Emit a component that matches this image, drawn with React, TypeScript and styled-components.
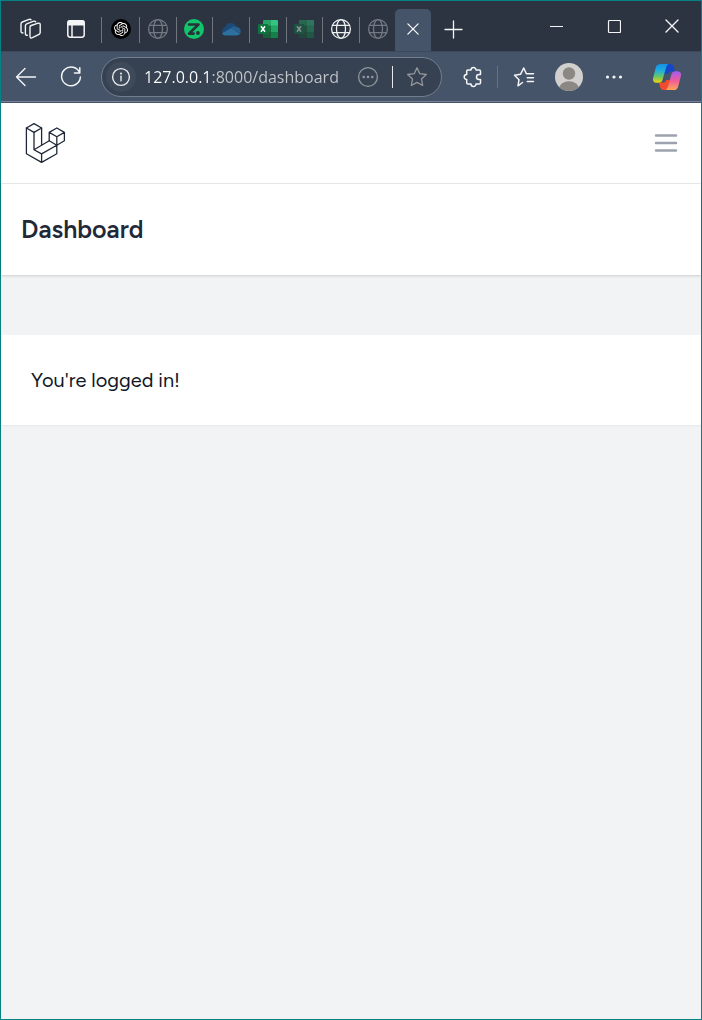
import React from "react";
import styled, { createGlobalStyle } from "styled-components";
import { SiOpenai } from "react-icons/si";

const GlobalStyle = createGlobalStyle`
  * { box-sizing: border-box; }
  body { margin: 0; background: #f2f3f5; }
  button, input { font: inherit; }
`;

const Window = styled.div`
  display: flex;
  flex-direction: column;
  min-height: 100vh;
  border: 1px solid #048286;
  background: #f2f3f5;
  font-family: Figtree, Lato, "Open Sans", sans-serif;
`;

const TabStrip = styled.div`
  display: flex;
  align-items: stretch;
  height: 50px;
  background: #2b3440;
`;

const StripTools = styled.div`
  display: flex;
  width: 100px;
  padding-left: 7px;
`;

const IconButton = styled.button<{ $width?: number }>`
  display: flex;
  flex: none;
  align-items: center;
  justify-content: center;
  width: ${(p) => p.$width ?? 45}px;
  padding: 0;
  border: 0;
  background: none;
  color: #f4f5f6;
`;

const StripButton = styled(IconButton)`
  padding-top: 6px;
`;

const Tabs = styled.div`
  display: flex;
  width: 330px;
  padding-top: 8px;
`;

const Tab = styled.button<{ $dim?: boolean }>`
  display: flex;
  flex: 1;
  align-items: center;
  justify-content: center;
  height: 26px;
  margin-top: 8px;
  padding: 0 0 2px;
  border: 0;
  border-left: 1px solid #70767e;
  background: none;
  color: ${(p) => (p.$dim ? "#737982" : "#eceef0")};

  &:first-child {
    flex: 0 0 38px;
  }
`;

const ActiveTab = styled.button`
  display: flex;
  flex: 1;
  align-items: center;
  justify-content: center;
  padding: 0 0 2px;
  border: 0;
  border-radius: 5px 5px 0 0;
  background: #455469;
  color: #ffffff;
`;

const WindowControls = styled.div`
  display: flex;
  margin-left: auto;
`;

const Toolbar = styled.div`
  display: flex;
  align-items: center;
  height: 52px;
  padding: 0 3px 2px 2px;
  background: #455469;
  border-top: 1px solid #3d495a;
  box-shadow: inset 0 -1px 0 #455469, inset 0 -2px 0 #778294;
`;

const AddressBar = styled.label`
  display: flex;
  flex: 1;
  align-items: center;
  min-width: 0;
  height: 40px;
  margin: 0 8px;
  padding: 0 0 0 4px;
  border: 1px solid #747f8e;
  border-radius: 20px;
  background: #364252;
  color: #94979b;
`;

const SiteInfo = styled.span`
  display: flex;
  flex: none;
  align-items: center;
  justify-content: center;
  width: 30px;
  height: 30px;
  border-radius: 15px;
  background: #3e4959;
  color: #e9ebed;
`;

const AddressInput = styled.input`
  flex: 1;
  min-width: 0;
  height: 30px;
  margin-left: 8px;
  padding: 0;
  border: 0;
  outline: 0;
  background: linear-gradient(90deg, #ffffff 67px, #c3c6ca 67px);
  background-clip: text;
  -webkit-background-clip: text;
  -webkit-text-fill-color: transparent;
  font-family: "Segoe UI", "Open Sans", sans-serif;
  font-size: 16px;
`;

const PillButton = styled(IconButton)`
  height: 30px;
  color: #94979b;
`;

const Divider = styled.span<{ $color: string }>`
  flex: none;
  width: 1px;
  height: 22px;
  background: ${(p) => p.$color};
`;

const ToolDivider = styled(Divider)`
  margin: 0 3px 0 2px;
`;

const Nav = styled.nav`
  display: flex;
  align-items: center;
  justify-content: space-between;
  height: 81px;
  padding: 0 20px;
  border-bottom: 1px solid #eaebee;
  background: #ffffff;
`;

const HomeLink = styled.a`
  display: flex;
  color: #1f2937;
`;

const MenuButton = styled(IconButton)`
  width: 30px;
  height: 30px;
  color: #9ca3af;
`;

const PageHeader = styled.header`
  padding: 30px 20px;
  background: #ffffff;
  box-shadow: 0 1px 3px rgba(0, 0, 0, 0.1), 0 1px 2px rgba(0, 0, 0, 0.06);
`;

const Title = styled.h2`
  margin: 0;
  color: #1f2937;
  font-family: Figtree, Inter, sans-serif;
  font-size: 25px;
  font-weight: 600;
  line-height: 31px;
`;

const Main = styled.main`
  padding: 60px 0;
`;

const Card = styled.section`
  padding: 30px;
  background: #ffffff;
  box-shadow: 0 1px 2px rgba(0, 0, 0, 0.05);
`;

const Message = styled.p`
  margin: 0;
  color: #111827;
  font-size: 20px;
  line-height: 30px;
`;

const stroke = {
  fill: "none",
  stroke: "currentColor",
  strokeLinecap: "round" as const,
  strokeLinejoin: "round" as const,
};

const Workspaces = () => (
  <svg width="24" height="22" viewBox="0 0 24 22" {...stroke} strokeWidth="1.4">
    <path d="M11 9.2q0-1.3 1.200-1.700l7-2.300q2-.5 2 1.300v8q0 1.200-1.200 1.800l-6.600 3.400q-2.400 1-2.400-1.400z" />
    <path d="M8.400 17.200q-2 .3-2-1.800V7.800q0-1.400 1.300-1.900l7-2.700q1.400-.4 2 .6" />
    <path d="M4 14.900q-2 .3-2-1.800V6q0-1.400 1.300-2l6.800-2.700q1.200-.4 1.900.5" />
  </svg>
);

const TabPane = () => (
  <svg width="20" height="20" viewBox="0 0 20 20" {...stroke} strokeWidth="1.5">
    <rect x="1.8" y="1.8" width="16.4" height="16.4" rx="2.4" />
    <path d="M2.300 2.300h15.400v3.500H2.300z" fill="currentColor" />
    <path d="M6 6v12" />
  </svg>
);

const Globe = () => (
  <svg width="22" height="22" viewBox="0 0 22 22" {...stroke} strokeWidth="1.3">
    <circle cx="11" cy="11" r="9.4" />
    <ellipse cx="11" cy="11" rx="4.5" ry="9.4" />
    <path d="M2.500 7.300h17M2.500 14.700h17" />
  </svg>
);

const OpenAiBadge = styled.span`
  display: flex;
  align-items: center;
  justify-content: center;
  width: 20px;
  height: 20px;
  border-radius: 50%;
  background: #000000;
  color: #ffffff;
`;

const GreenMark = () => (
  <svg width="20" height="20" viewBox="0 0 20 20">
    <circle cx="10" cy="10" r="10" fill="#12c46b" />
    <path d="M5 5.500h9.500L5 14.600h4.600" fill="none" stroke="#26333a" strokeWidth="2.600" strokeLinejoin="round" strokeLinecap="round" />
    <circle cx="13.900" cy="14" r="1.900" fill="#26333a" />
  </svg>
);

const Cloud = () => (
  <svg width="20" height="14" viewBox="0 0 20 14">
    <path d="M4 5.200A6 6 0 0 1 15.200 4.700L17 8 4 12.800A4 4 0 0 1 4 5.200z" fill="#1c4a78" />
    <path d="M8.800 7.200a5 5 0 0 1 6.500-2.500 4.600 4.600 0 0 1 4.200 6.200z" fill="#27608f" />
    <path d="M1 11.200 8.600 7q1.200-.5 2.400.2l8.300 4.200Q18 13.400 15.400 13.400H4.400q-2.300 0-3.400-2.200z" fill="#2d6f9f" />
  </svg>
);

const Spreadsheet = ({ dim }: { dim?: boolean }) => (
  <svg width="20" height="18" viewBox="0 0 20 18" opacity={dim ? 0.45 : 1}>
    <path d="M6 0h7v6H5V1q0-1 1-1z" fill="#22a565" />
    <path d="M13 0h6q1 0 1 1v5h-7z" fill="#35c481" />
    <path d="M5 5.500h8V12H5z" fill="#15733f" />
    <path d="M13 5.500h7V12h-7z" fill="#22a565" />
    <path d="M5 12h15v5q0 1-1 1H6q-1 0-1-1z" fill="#176039" />
    <path d="M13 12h7v5q0 1-1 1h-6z" fill="#14804a" />
    <rect y="4" width="10" height="10" rx="1" fill="#0d7440" />
    <path d="m3 6.200 4 5.600M7 6.200l-4 5.600" stroke="#ffffff" strokeWidth="1.500" />
  </svg>
);

const Cross = ({ size }: { size: number }) => (
  <svg width={size} height={size} viewBox="0 0 14 14" {...stroke} strokeWidth="1.4">
    <path d="m1 1 12 12M13 1 1 13" />
  </svg>
);

const Plus = () => (
  <svg width="19" height="19" viewBox="0 0 19 19" {...stroke} strokeWidth="1.3">
    <path d="M9.500 1v17M1 9.500h17" />
  </svg>
);

const Minimize = () => (
  <svg width="14" height="14" viewBox="0 0 14 14">
    <path d="M1 7.500h13" stroke="currentColor" />
  </svg>
);

const Maximize = () => (
  <svg width="14" height="14" viewBox="0 0 14 14">
    <rect x="1.500" y="1.500" width="12" height="12" rx="1" fill="none" stroke="currentColor" strokeWidth="1.200" />
  </svg>
);

const Back = () => (
  <svg width="22" height="20" viewBox="0 0 22 20" {...stroke} strokeWidth="1.4">
    <path d="M20.500 10h-19M10 1.500 1.500 10l8.500 8.500" />
  </svg>
);

const Reload = () => (
  <svg width="22" height="22" viewBox="0 0 22 22" {...stroke} strokeWidth="1.5">
    <path d="M19.800 7A9.400 9.400 0 1 0 20.400 11M19.800 1.800V7h-5.300" />
  </svg>
);

const Info = () => (
  <svg width="20" height="20" viewBox="0 0 20 20" {...stroke} strokeWidth="1.4">
    <circle cx="10" cy="10" r="8.400" />
    <path d="M10 9.300v4.500" />
    <circle cx="10" cy="6.600" r=".4" fill="currentColor" />
  </svg>
);

const CircleDots = () => (
  <svg width="22" height="22" viewBox="0 0 22 22" {...stroke} strokeWidth="1.3">
    <circle cx="11" cy="11" r="9.400" />
    <g fill="currentColor" stroke="none">
      <circle cx="6.700" cy="11" r="1.300" />
      <circle cx="11" cy="11" r="1.300" />
      <circle cx="15.300" cy="11" r="1.300" />
    </g>
  </svg>
);

const Star = () => (
  <svg width="22" height="22" viewBox="0 0 22 22" {...stroke} strokeWidth="1.3">
    <path d="m11 1.800 2.800 5.900 6.500.8-4.800 4.500 1.200 6.500L11 16.400l-5.700 3.100L6.500 13 1.700 8.500l6.500-.8z" />
  </svg>
);

const Puzzle = () => (
  <svg width="20" height="22" viewBox="0 0 20 22" {...stroke} strokeWidth="1.5">
    <path d="M5 4h3a2.500 2.500 0 0 1 5 0h3.200q1.300 0 1.300 1.300v3.200h-1.500a2.500 2.500 0 0 0 0 5h1.500v3.200q0 1.300-1.300 1.300H13a2.500 2.500 0 0 1-5 0H5q-1.300 0-1.300-1.300v-3.200a2.500 2.500 0 0 1 0-5V5.300Q3.700 4 5 4z" />
  </svg>
);

const Favorites = () => (
  <svg width="22" height="22" viewBox="0 0 22 22" {...stroke} strokeWidth="1.5">
    <path d="M9.500 16.500 5 19.800 6 13.700 1.500 9.200l6-.9L10.700 2l2.700 5.800h7.100M14.300 11.700h6.200M14.300 15.600h6.200" />
  </svg>
);

const Avatar = () => (
  <svg width="28" height="28" viewBox="0 0 28 28">
    <defs>
      <clipPath id="avatarClip">
        <circle cx="14" cy="14" r="14" />
      </clipPath>
    </defs>
    <circle cx="14" cy="14" r="14" fill="#d2d0ce" />
    <circle cx="14" cy="10.500" r="6.200" fill="#8b8783" />
    <ellipse cx="14" cy="26" rx="10" ry="7.800" fill="#8b8783" clipPath="url(#avatarClip)" />
  </svg>
);

const Dots = () => (
  <svg width="18" height="6" viewBox="0 0 18 6" fill="currentColor">
    <circle cx="2.500" cy="3" r="1.600" />
    <circle cx="9" cy="3" r="1.600" />
    <circle cx="15.500" cy="3" r="1.600" />
  </svg>
);

const Copilot = () => (
  <svg width="28" height="26" viewBox="0 0 28 26">
    <defs>
      <linearGradient id="cpLeft" x1="0" y1="0" x2="0" y2="1">
        <stop offset="0" stopColor="#1492e6" />
        <stop offset=".35" stopColor="#20aee0" />
        <stop offset=".65" stopColor="#62c56c" />
        <stop offset="1" stopColor="#f3d20c" />
      </linearGradient>
      <linearGradient id="cpRight" x1="0" y1="0" x2="0" y2="1">
        <stop offset="0" stopColor="#a05cf0" />
        <stop offset=".5" stopColor="#ee5c9c" />
        <stop offset="1" stopColor="#ffa653" />
      </linearGradient>
    </defs>
    <path d="M12 0h5.500q2.500 0 3.300 2.600L22 7.500h-4q-2.500 0-3.300 2.500L11 10z" fill="#1646c8" />
    <path d="M6 18.500h4q2.500 0 3.300-2.500L17 16l-2 10h-4.500Q8 26 7.200 23.400z" fill="#f04b2f" />
    <path d="M7.500 0h8q-1.700.8-2.400 3.200L9.500 16q-.9 2.800-3.800 2.800H4q-5 0-3.800-5.200l2.600-10Q3.800 0 7.500 0z" fill="url(#cpLeft)" />
    <path d="M20.500 26h-8q1.700-.8 2.400-3.200L18.500 10q.9-2.800 3.800-2.800H24q5 0 3.800 5.200l-2.600 10Q24.200 26 20.500 26z" fill="url(#cpRight)" />
  </svg>
);

const LaravelLogo = () => (
  <svg width="50" height="42" viewBox="0 0 50 42" {...stroke} strokeWidth="1.300">
    <path d="m13 1.600 7.600 4.400L13 10.400 5.400 6z" />
    <path d="M5.400 6v25.700l15.200 8.700 15.200-8.700v-8.500M13 10.400v17.300l7.600 4.200v8.500M20.600 6v17.300M13 27.700l15.200-8.900M20.600 31.900l15.200-8.700" />
    <path d="m35.800 6 7.600 4.400-7.600 4.300-7.600-4.300zM28.200 10.400v8.400l7.600 4.400 7.600-4.400v-8.400M35.800 14.700v8.500" />
  </svg>
);

const Bars = () => (
  <svg width="30" height="30" viewBox="0 0 24 24" {...stroke} strokeWidth="2">
    <path d="M4 6h16M4 12h16M4 18h16" />
  </svg>
);

export default function App() {
  return (
    <Window>
      <GlobalStyle />
      <TabStrip>
        <StripTools>
          <StripButton aria-label="Workspaces"><Workspaces /></StripButton>
          <StripButton aria-label="Tab actions"><TabPane /></StripButton>
        </StripTools>
        <Tabs>
          <Tab aria-label="ChatGPT"><OpenAiBadge><SiOpenai size={14} /></OpenAiBadge></Tab>
          <Tab aria-label="Tab" $dim><Globe /></Tab>
          <Tab aria-label="Tab"><GreenMark /></Tab>
          <Tab aria-label="OneDrive"><Cloud /></Tab>
          <Tab aria-label="Excel"><Spreadsheet /></Tab>
          <Tab aria-label="Excel"><Spreadsheet dim /></Tab>
          <Tab aria-label="Tab"><Globe /></Tab>
          <Tab aria-label="Tab" $dim><Globe /></Tab>
          <ActiveTab aria-label="Close tab"><Cross size={12} /></ActiveTab>
        </Tabs>
        <StripButton $width={44} aria-label="New tab"><Plus /></StripButton>
        <WindowControls>
          <IconButton $width={58} aria-label="Minimize"><Minimize /></IconButton>
          <IconButton $width={58} aria-label="Maximize"><Maximize /></IconButton>
          <IconButton $width={58} aria-label="Close"><Cross size={14} /></IconButton>
        </WindowControls>
      </TabStrip>

      <Toolbar>
        <IconButton aria-label="Back"><Back /></IconButton>
        <IconButton aria-label="Refresh"><Reload /></IconButton>
        <AddressBar>
          <SiteInfo><Info /></SiteInfo>
          <AddressInput aria-label="Address" defaultValue="127.0.0.1:8000/dashboard" />
          <PillButton $width={48} aria-label="More"><CircleDots /></PillButton>
          <Divider $color="#e6e8ea" />
          <PillButton $width={48} aria-label="Favorite"><Star /></PillButton>
        </AddressBar>
        <IconButton aria-label="Extensions"><Puzzle /></IconButton>
        <ToolDivider $color="#657284" />
        <IconButton aria-label="Favorites"><Favorites /></IconButton>
        <IconButton aria-label="Profile"><Avatar /></IconButton>
        <IconButton aria-label="Settings"><Dots /></IconButton>
        <IconButton $width={62} aria-label="Copilot"><Copilot /></IconButton>
      </Toolbar>

      <Nav>
        <HomeLink href="/" aria-label="Home"><LaravelLogo /></HomeLink>
        <MenuButton aria-label="Menu"><Bars /></MenuButton>
      </Nav>
      <PageHeader>
        <Title>Dashboard</Title>
      </PageHeader>
      <Main>
        <Card>
          <Message>You're logged in!</Message>
        </Card>
      </Main>
    </Window>
  );
}
